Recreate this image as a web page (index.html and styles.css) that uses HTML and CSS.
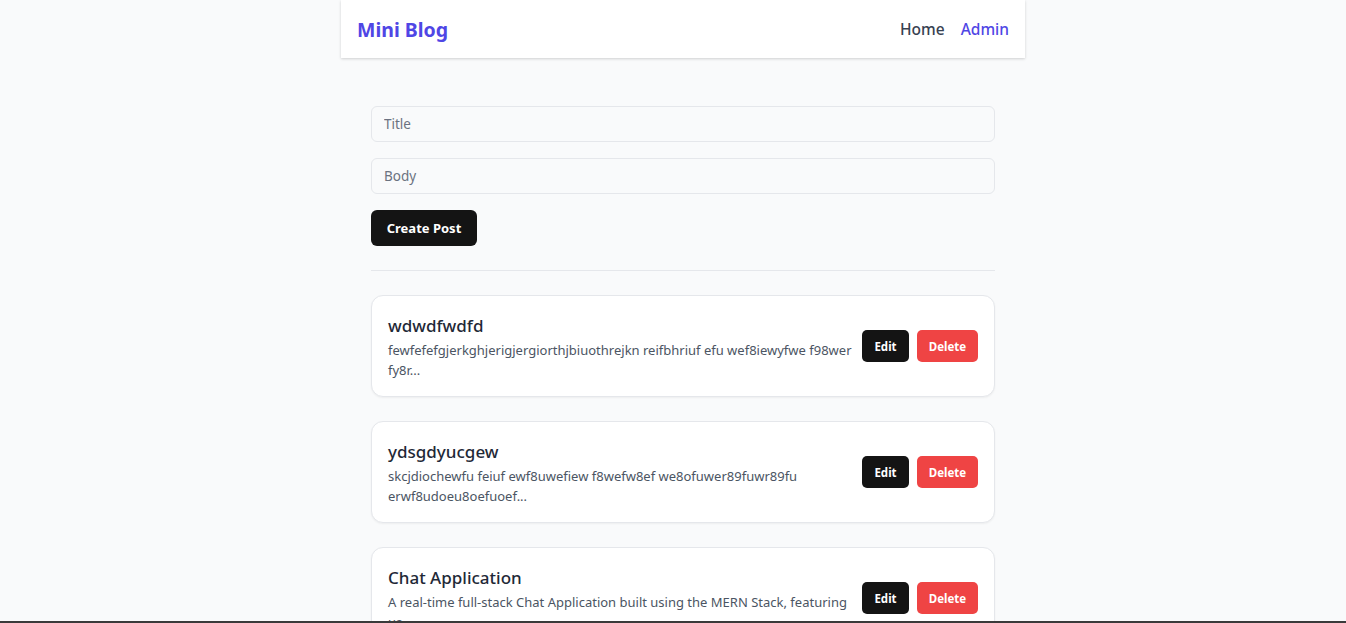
FILE: index.html
```html
<!DOCTYPE html>
<html lang="en">
<head>
<meta charset="utf-8">
<title>Mini Blog</title>
<link rel="stylesheet" href="styles.css">
</head>
<body>
<div class="page">
  <header class="navbar">
    <a class="brand" href="#">Mini Blog</a>
    <nav class="nav">
      <a class="nav-link" href="#">Home</a>
      <a class="nav-link active" href="#">Admin</a>
    </nav>
  </header>
  <main class="main">
    <form class="post-form">
      <input class="field" type="text" placeholder="Title">
      <input class="field" type="text" placeholder="Body">
      <button class="btn btn-dark btn-lg" type="button">Create Post</button>
    </form>
    <hr class="divider">
    <div class="posts">
      <article class="card">
        <div class="card-text">
          <h2 class="card-title">wdwdfwdfd</h2>
          <p class="card-body">fewfefefgjerkghjerigjergiorthjbiuothrejkn reifbhriuf efu wef8iewyfwe f98wer fy8r...</p>
        </div>
        <div class="card-actions">
          <button class="btn btn-dark btn-sm" type="button">Edit</button>
          <button class="btn btn-red btn-sm" type="button">Delete</button>
        </div>
      </article>
      <article class="card">
        <div class="card-text">
          <h2 class="card-title">ydsgdyucgew</h2>
          <p class="card-body">skcjdiochewfu feiuf ewf8uwefiew f8wefw8ef we8ofuwer89fuwr89fu erwf8udoeu8oefuoef...</p>
        </div>
        <div class="card-actions">
          <button class="btn btn-dark btn-sm" type="button">Edit</button>
          <button class="btn btn-red btn-sm" type="button">Delete</button>
        </div>
      </article>
      <article class="card">
        <div class="card-text">
          <h2 class="card-title">Chat Application</h2>
          <p class="card-body">A real-time full-stack Chat Application built using the MERN Stack, featuring us...</p>
        </div>
        <div class="card-actions">
          <button class="btn btn-dark btn-sm" type="button">Edit</button>
          <button class="btn btn-red btn-sm" type="button">Delete</button>
        </div>
      </article>
    </div>
  </main>
</div>
<div class="frame-edge"></div>
</body>
</html>
```
FILE: styles.css
```css
* { box-sizing: border-box; }
html, body { margin: 0; padding: 0; }
body {
  background: #f9fafb;
  font-family: "Noto Sans", "Open Sans", sans-serif;
  color: #1f2937;
}
.page {
  padding-left: 20px;
}
.navbar {
  max-width: 684px;
  margin: 0 auto;
  height: 58px;
  background: #fff;
  box-shadow: 0 1px 3px rgba(0,0,0,0.12), 0 1px 2px rgba(0,0,0,0.06);
  display: flex;
  align-items: center;
  justify-content: space-between;
  padding: 0 16px;
}
.brand {
  color: #4f46e5;
  font-weight: 700;
  font-size: 19.5px;
  text-decoration: none;
}
.nav { display: flex; gap: 16px; }
.nav-link {
  font-size: 15.5px;
  font-weight: 500;
  color: #374151;
  text-decoration: none;
}
.nav-link.active { color: #4f46e5; }
.main {
  width: 624px;
  margin: 0 auto;
  padding-top: 48px;
}
.post-form {
  display: flex;
  flex-direction: column;
  align-items: flex-start;
  gap: 16px;
}
.field {
  width: 100%;
  height: 36px;
  border: 1px solid #e5e7eb;
  border-radius: 6px;
  background: #f9fafb;
  padding: 0 12px;
  font-family: inherit;
  font-size: 13.5px;
  color: #1f2937;
}
.field::placeholder { color: #6b7280; }
.btn {
  border: none;
  font-family: inherit;
  font-weight: 700;
  color: #fff;
  cursor: pointer;
}
.btn-lg {
  height: 36px;
  width: 106px;
  padding: 0;
  font-size: 13px;
  border-radius: 6px;
}
.btn-sm {
  height: 32px;
  padding: 0;
  font-size: 11.5px;
  border-radius: 5px;
}
.btn-sm.btn-dark { width: 47px; }
.btn-sm.btn-red { width: 61px; }
.btn-dark { background: #141414; }
.btn-red { background: #ef4444; }
.divider {
  border: none;
  border-top: 1px solid #e5e7eb;
  margin: 24px 0 24px;
}
.posts {
  display: flex;
  flex-direction: column;
  gap: 24px;
}
.card {
  background: #fff;
  border: 1px solid #e5e7eb;
  border-radius: 12px;
  box-shadow: 0 1px 2px rgba(0,0,0,0.05);
  padding: 16px;
  display: flex;
  align-items: center;
  gap: 4px;
}
.card-text { flex: 1; min-width: 0; }
.card-title {
  margin: 0;
  font-size: 17px;
  font-weight: 500;
  line-height: 28px;
  color: #1f2937;
}
.card-body {
  margin: 0;
  font-size: 13px;
  line-height: 20px;
  color: #4b5563;
}
.card-actions {
  display: flex;
  gap: 8px;
  flex-shrink: 0;
}
.frame-edge {
  position: fixed;
  left: 0;
  right: 0;
  bottom: 0;
  height: 2px;
  background: #3a3a3a;
}
```
